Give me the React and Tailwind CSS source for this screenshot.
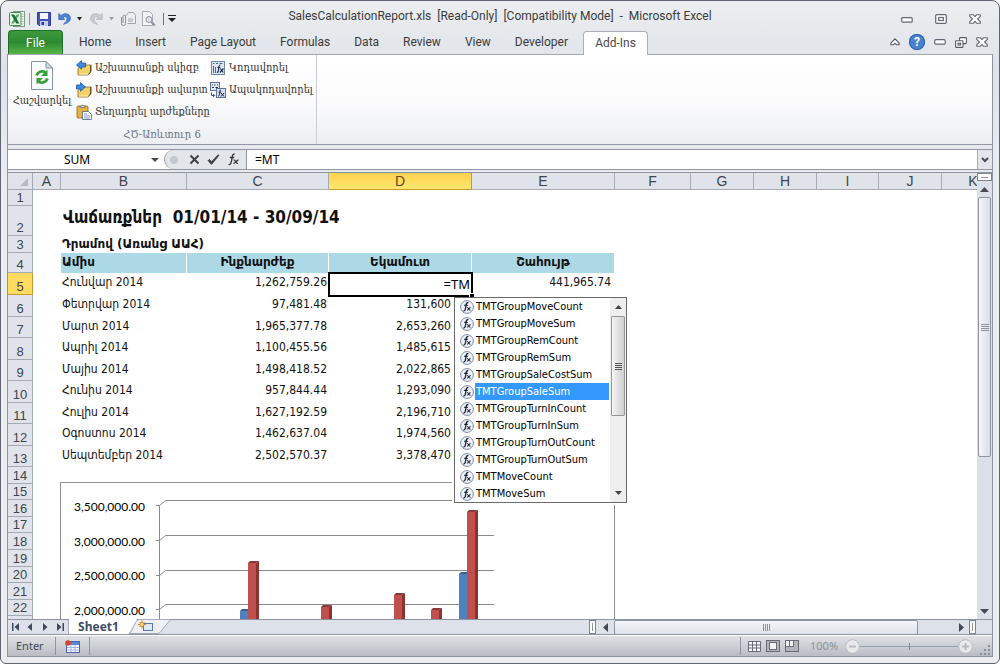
import React from 'react';

const UI = "font-[Roboto,'Open_Sans',sans-serif]";
const HUMANIST = "font-['Noto_Sans','Open_Sans',sans-serif]";
const CELL = "font-['DejaVu_Sans_Condensed','DejaVu_Sans',sans-serif]";
const SERIF = "font-['DejaVu_Serif_Condensed','DejaVu_Serif',serif]";

const tabs = ['Home', 'Insert', 'Page Layout', 'Formulas', 'Data', 'Review', 'View', 'Developer'];

const columns = [
  { id: 'A', width: 'w-[28px]' },
  { id: 'B', width: 'w-[126px]' },
  { id: 'C', width: 'w-[142px]' },
  { id: 'D', width: 'w-[143px]' },
  { id: 'E', width: 'w-[143px]' },
  { id: 'F', width: 'w-[76px]' },
  { id: 'G', width: 'w-[63px]' },
  { id: 'H', width: 'w-[63px]' },
  { id: 'I', width: 'w-[62px]' },
  { id: 'J', width: 'w-[63px]' },
  { id: 'K', width: 'w-[63px]' },
];

const sales = [
  { row: 6, h: 'h-[22px]', month: 'Փետրվար 2014', cost: '97,481.48', income: '131,600' },
  { row: 7, h: 'h-[21px]', month: 'Մարտ 2014', cost: '1,965,377.78', income: '2,653,260' },
  { row: 8, h: 'h-[22px]', month: 'Ապրիլ 2014', cost: '1,100,455.56', income: '1,485,615' },
  { row: 9, h: 'h-[21px]', month: 'Մայիս 2014', cost: '1,498,418.52', income: '2,022,865' },
  { row: 10, h: 'h-[22px]', month: 'Հունիս 2014', cost: '957,844.44', income: '1,293,090' },
  { row: 11, h: 'h-[21px]', month: 'Հուլիս 2014', cost: '1,627,192.59', income: '2,196,710' },
  { row: 12, h: 'h-[22px]', month: 'Օգոստոս 2014', cost: '1,462,637.04', income: '1,974,560' },
  { row: 13, h: 'h-[21px]', month: 'Սեպտեմբեր 2014', cost: '2,502,570.37', income: '3,378,470' },
];

const emptyRows = [
  { row: 14, h: 'h-[17px]' },
  { row: 15, h: 'h-[16px]' },
  { row: 16, h: 'h-[17px]' },
  { row: 17, h: 'h-[16px]' },
  { row: 18, h: 'h-[17px]' },
  { row: 19, h: 'h-[17px]' },
  { row: 20, h: 'h-[16px]' },
  { row: 21, h: 'h-[17px]' },
  { row: 22, h: 'h-[16px]' },
];

const functions = [
  'TMTGroupMoveCount',
  'TMTGroupMoveSum',
  'TMTGroupRemCount',
  'TMTGroupRemSum',
  'TMTGroupSaleCostSum',
  'TMTGroupSaleSum',
  'TMTGroupTurnInCount',
  'TMTGroupTurnInSum',
  'TMTGroupTurnOutCount',
  'TMTGroupTurnOutSum',
  'TMTMoveCount',
  'TMTMoveSum',
];

/* ---------- icons ---------- */

function ExcelIcon() {
  return (
    <svg width="16" height="16" viewBox="0 0 16 16">
      <rect x="4.5" y=".5" width="11" height="15" fill="#fff" stroke="#7f9a83" />
      <path d="M12.500 3h2M12.500 5.500h2M12.500 8h2M12.500 10.500h2M12.500 13h2" stroke="#9db8a1" />
      <rect x=".5" y="1.500" width="11.500" height="13" rx="1" fill="#e9f5e9" stroke="#3f8a4a" />
      <path d="M10.500 3.500H7.700L2 12.500h2.800z" fill="#54b05c" />
      <path d="M2 3.500h3.200l5.300 9H7.300z" fill="#1a7530" />
    </svg>
  );
}

function SaveIcon() {
  return (
    <svg width="14" height="14" viewBox="0 0 14 14">
      <path d="M.5.5h13v13H2L.5 12z" fill="#4a55b8" stroke="#2f3a94" />
      <rect x="3" y="1" width="8" height="6" fill="#f4f6fc" />
      <rect x="3" y="9" width="8" height="5" fill="#c9cff0" />
      <rect x="4.500" y="10" width="2.500" height="3" fill="#2f3a94" />
    </svg>
  );
}

function UndoIcon({ redo }) {
  return (
    <svg width="13" height="13" viewBox="0 0 13 13" className={redo ? '-scale-x-100' : ''}>
      <path
        d="M.8 1.500v6h6L4.800 5.600C6.300 4.200 8.900 4.400 9 6.500c.1 1.800-1 3.600-3.500 5.700 4.500-1 7.200-3.200 6.900-6.400C12.100 1.500 6.300.2 3 3.700z"
        fill={redo ? '#c9ccd2' : '#4a86d8'}
        stroke={redo ? '#aeb2b9' : '#2a5cae'}
        strokeWidth=".7"
      />
    </svg>
  );
}

function Caret({ className = 'fill-[#222]' }) {
  return (
    <svg width="7" height="4" viewBox="0 0 7 4" className={className}>
      <path d="M1 0h5L3.500 3.500z" />
    </svg>
  );
}

function MailIcon() {
  return (
    <svg width="16" height="16" viewBox="0 0 16 16" fill="none" stroke="#a0a4aa">
      <path d="M5.500 5.500l3-4h5l2 3v8h-8" fill="#eceef1" />
      <path d="M8 8h5M8 10h5" />
      <path d="M1.500 6v6.500a2 2 0 0 0 4 0V5a1.300 1.300 0 0 0-2.500 0v7" stroke="#8d9198" />
    </svg>
  );
}

function PreviewIcon() {
  return (
    <svg width="15" height="16" viewBox="0 0 15 16" fill="none" stroke="#a8abb1">
      <path d="M1.500.5h7l3 3v11h-10z" fill="#f3f4f6" />
      <circle cx="8" cy="8.500" r="3" fill="#dfe2e6" stroke="#8f939a" />
      <path d="M10.200 10.800l3.600 3.700" stroke="#8f939a" strokeWidth="2" />
    </svg>
  );
}

function CalcIcon() {
  return (
    <svg width="22" height="29" viewBox="0 0 22 29">
      <path d="M.5.500h14.500l6.500 6.500v21.500H.5z" fill="#fbfcfe" stroke="#8593a8" />
      <path d="M15 .500V7h6.500z" fill="#d4dce8" stroke="#8593a8" />
      <path d="M5.500 14.500a6 6 0 0 1 8.800-3.200M16.500 17.500a6 6 0 0 1-8.800 3.200" fill="none" stroke="#35a138" strokeWidth="2.800" />
      <path d="M16.500 8.500v6.500h-6.500zM5.500 23.500V17h6.500z" fill="#35a138" />
    </svg>
  );
}

function BookArrowIcon({ right }) {
  return (
    <svg width="16" height="16" viewBox="0 0 16 16">
      <path d="M2 8.500L5 5h9.500v7L12 15H2z" fill="#f2d268" stroke="#8a6a1f" strokeWidth=".8" />
      <path d="M12 15l3.500-3.500V4.500L14 5v6.500z" fill="#6b5218" />
      <path d="M3 14h9" stroke="#fff3bd" />
      {right ? (
        <path d="M.5 3h4V.6L9.500 5l-5 4.200V7h-4z" fill="#3f8ae0" stroke="#1f56a8" strokeWidth=".8" />
      ) : (
        <path d="M9.500 3h-4V.6L.5 5l5 4.200V7h4z" fill="#3f8ae0" stroke="#1f56a8" strokeWidth=".8" />
      )}
    </svg>
  );
}

function PasteIcon() {
  return (
    <svg width="16" height="16" viewBox="0 0 16 16">
      <rect x="1" y="2" width="11" height="12" rx="1" fill="#e9b23e" stroke="#8f6415" strokeWidth=".8" />
      <path d="M4 3.500V2h1.200a1.400 1.400 0 0 1 2.600 0H9v1.500z" fill="#d4d8de" stroke="#5d6470" strokeWidth=".7" />
      <path d="M6.500 7.500h6l3 3v5h-9z" fill="#fff" stroke="#4f6284" strokeWidth=".8" />
      <path d="M8 10h3M8 12h6M8 14h6" stroke="#7f98c4" />
    </svg>
  );
}

function EncodeIcon() {
  return (
    <svg width="14" height="14" viewBox="0 0 14 14">
      <rect x=".5" y=".5" width="13" height="13" fill="#dbe5f3" stroke="#6f87ab" />
      <path d="M2 2.500h1.500M5 2.500h2M8.500 2.500h3M2.500 5v7M4.500 6v6" stroke="#4e6487" />
      <path d="M9.300 4c-1.600 0-1.300 2-1.800 5-.2 1.600-.6 2.500-1.600 2.300M6.300 6.500h3" fill="none" stroke="#1e2f4d" strokeWidth="1.200" />
      <path d="M9.300 7.500l3 4M12.500 7.500l-3.500 4" stroke="#1e2f4d" strokeWidth="1.200" />
    </svg>
  );
}

function DecodeIcon() {
  return (
    <svg width="16" height="16" viewBox="0 0 16 16">
      <rect x=".5" y=".5" width="9" height="8" fill="#e3ebf6" stroke="#5d7399" />
      <path d="M2 3h1M4 3h1.500M7 3h1M2 5.500h2M5.500 5.500h2.500" stroke="#1f3050" />
      <path d="M1.500 10.500v3h3M3.200 12l1.500 1.500-1.500 1.500" fill="none" stroke="#2c57a0" />
      <rect x="6.500" y="6.500" width="9" height="9" fill="#d3dff0" stroke="#5d7399" />
      <path d="M11 7.800c-1.500 0-1 2.500-1.600 5-.2 1-.6 1.500-1.300 1.300M8.700 10h2.500M11 11l3 3.500M14 11l-3 3.500" fill="none" stroke="#16233c" />
    </svg>
  );
}

function FxIcon() {
  return (
    <svg width="14" height="14" viewBox="0 0 14 14" className="shrink-0">
      <circle cx="7" cy="7" r="6.400" fill="#edf2fa" stroke="#7d8ba3" />
      <path d="M8.400 2.700C6 2 6.200 5 5.600 7.800c-.4 2.200-.8 3.400-2.200 3.100M4.200 5.300h3.600" fill="none" stroke="#1c2433" strokeWidth="1.300" />
      <path d="M7 7.500c1.600-.4 1.700 3.200 3.500 2.800M10.600 7.500c-1.300 0-2 2.900-3.700 2.800" fill="none" stroke="#1c2433" strokeWidth="1.100" />
    </svg>
  );
}

function MinimizeGlyph() {
  return (
    <svg width="12" height="6" viewBox="0 0 12 6">
      <rect x=".7" y=".7" width="10.500" height="4.500" rx="1" fill="#fff" stroke="#626875" strokeWidth="1.200" />
    </svg>
  );
}

function MaximizeGlyph() {
  return (
    <svg width="12" height="10" viewBox="0 0 12 10">
      <rect x=".7" y=".7" width="10.600" height="8.600" rx="1" fill="#fff" stroke="#626875" strokeWidth="1.200" />
      <rect x="3.700" y="3.500" width="4.600" height="3" fill="#fff" stroke="#626875" strokeWidth="1.200" />
    </svg>
  );
}

function RestoreGlyph() {
  return (
    <svg width="12" height="11" viewBox="0 0 12 11" fill="#fff" stroke="#555b66" strokeWidth="1.100">
      <rect x="4.600" y=".6" width="6.800" height="6" rx=".6" />
      <rect x=".6" y="3.800" width="7.400" height="6.600" rx=".6" />
      <rect x="3" y="6.200" width="2.600" height="1.800" />
    </svg>
  );
}

function CloseGlyph() {
  return (
    <svg width="12" height="10" viewBox="0 0 12 10">
      <path
        d="M.7.7h3.600L6 2.700 7.700.7h3.600v1.600L8.600 5l2.700 2.700v1.600H7.700L6 7.300l-1.700 2H.7V7.700L3.400 5 .7 2.300z"
        fill="#fff"
        stroke="#626875"
        strokeWidth="1.100"
        strokeLinejoin="round"
      />
    </svg>
  );
}

function Arrow({ dir }) {
  const d = {
    up: 'M0 6h9L4.500 1z',
    down: 'M0 1h9L4.500 6z',
    left: 'M6 0v9L1 4.500z',
    right: 'M1 0v9l5-4.500z',
  }[dir];
  const tall = dir === 'left' || dir === 'right';
  return (
    <svg width={tall ? 6 : 9} height={tall ? 9 : 6} className="fill-[#444a54]">
      <path d={d} />
    </svg>
  );
}

function SheetNavIcon({ kind }) {
  const d = {
    first: 'M1 0h1.500v8H1zM8 0v8L3.500 4z',
    prev: 'M6 0v8L1.500 4z',
    next: 'M2 0v8l4.500-4z',
    last: 'M1 0v8l4.500-4zM6.500 0H8v8H6.500z',
  }[kind];
  return (
    <svg width="9" height="8" className="fill-[#3f4a5c]">
      <path d={d} />
    </svg>
  );
}

/* ---------- window chrome ---------- */

function TitleBar() {
  return (
    <div className="relative flex h-[29px] shrink-0 items-center justify-between pl-2 pr-[18px] pt-[6px]">
      <div className="flex items-center">
        <ExcelIcon />
        <span className="ml-1 mr-[7px] h-3 w-px bg-[#8d929b]" />
        <button aria-label="Save"><SaveIcon /></button>
        <button aria-label="Undo" className="ml-[7px]"><UndoIcon /></button>
        <button aria-label="Undo history" className="ml-[5px]"><Caret /></button>
        <button aria-label="Redo" className="ml-[7px]"><UndoIcon redo /></button>
        <button aria-label="Redo history" className="ml-[5px]"><Caret className="fill-[#9a9ea6]" /></button>
        <button aria-label="E-mail" className="ml-[5px]"><MailIcon /></button>
        <button aria-label="Print preview" className="ml-[5px]"><PreviewIcon /></button>
        <span className="ml-[7px] mr-1 h-3 w-px bg-[#6d727b]" />
        <button aria-label="Customize toolbar">
          <svg width="8" height="7" viewBox="0 0 8 7" className="fill-[#222]">
            <path d="M0 0h8v1H0zM0 3h8L4 7z" />
          </svg>
        </button>
      </div>
      <div className={`${UI} pointer-events-none absolute inset-x-0 top-1 text-center text-[12px] leading-[22px] whitespace-pre text-[#3b3b3b]`}>
        {'SalesCalculationReport.xls  [Read-Only]  [Compatibility Mode]  -  Microsoft Excel'}
      </div>
      <div className="flex items-center gap-[22px]">
        <button aria-label="Minimize" className="pt-[3px]"><MinimizeGlyph /></button>
        <button aria-label="Maximize"><MaximizeGlyph /></button>
        <button aria-label="Close"><CloseGlyph /></button>
      </div>
    </div>
  );
}

function TabRow() {
  return (
    <div className={`${UI} flex h-6 shrink-0 items-end pl-[7px] pr-[11px] text-[12px] text-[#3b3b3b]`}>
      <button className="h-6 w-[55px] rounded-t-[4px] border border-b-0 border-[#1f6b28] bg-linear-to-b from-[#3f9a3c] via-[#2c8a33] to-[#58b548] text-white">
        File
      </button>
      <nav className="ml-1 flex h-6 items-center">
        {tabs.map((tab) => (
          <button key={tab} className="h-6 px-3">
            {tab}
          </button>
        ))}
        <button className="z-10 -mb-px ml-[3px] h-6 w-[65px] rounded-t-[4px] border border-b-0 border-[#a9afb8] bg-white text-[#4a4a4a]">
          Add-Ins
        </button>
      </nav>
      <div className="ml-auto flex h-6 items-center gap-[9px]">
        <button aria-label="Collapse ribbon">
          <svg width="10" height="8" viewBox="0 0 10 8" fill="#fff" stroke="#555b66" strokeWidth="1.100">
            <path d="M5 .8L.9 5v1.700h2.600L5 5.200l1.500 1.500h2.600V5z" />
          </svg>
        </button>
        <button aria-label="Help" className="flex size-4 items-center justify-center rounded-full bg-[#4a82d0] text-[12px] leading-4 font-bold text-white ring-1 ring-[#2f62ad] ring-inset">
          ?
        </button>
        <button aria-label="Minimize workbook"><MinimizeGlyph /></button>
        <button aria-label="Restore workbook"><RestoreGlyph /></button>
        <button aria-label="Close workbook"><CloseGlyph /></button>
      </div>
    </div>
  );
}

function RibbonButton({ icon, label }) {
  return (
    <button className="flex h-[22px] items-center gap-[3px] whitespace-nowrap">
      <span className="flex w-4 justify-center">{icon}</span>
      {label}
    </button>
  );
}

function Ribbon() {
  return (
    <div className="flex h-[91px] shrink-0 border-y border-t-[#a3a9b3] border-b-[#9299a5] bg-linear-to-b from-white via-[#fcfcfd] to-[#eceef1]">
      <div className={`${SERIF} flex w-[309px] flex-col border-r border-[#c9cdd3] text-[11px] text-[#333]`}>
        <div className="flex pl-1 pt-[2px]">
          <button className="flex w-[60px] flex-col items-center gap-[3px] pt-1 whitespace-nowrap">
            <CalcIcon />
            Հաշվարկել
          </button>
          <div className="ml-1 flex w-[134px] flex-col items-start">
            <RibbonButton icon={<BookArrowIcon />} label="Աշխատանքի սկիզբ" />
            <RibbonButton icon={<BookArrowIcon right />} label="Աշխատանքի ավարտ" />
            <RibbonButton icon={<PasteIcon />} label="Տեղադրել արժեքները" />
          </div>
          <div className="flex flex-col items-start">
            <RibbonButton icon={<EncodeIcon />} label="Կոդավորել" />
            <RibbonButton icon={<DecodeIcon />} label="Ապակոդավորել" />
          </div>
        </div>
        <div className="mt-auto pb-px text-center text-[#6b7280]">ՀԾ-Առևտուր 6</div>
      </div>
    </div>
  );
}

function FormulaBar() {
  return (
    <div className="mt-1 flex h-[21px] shrink-0 border-y border-[#8f96a1] bg-white">
      <input
        aria-label="Name box"
        defaultValue="SUM"
        className={`${HUMANIST} w-[138px] bg-white text-center text-[12px] text-black outline-none`}
      />
      <button aria-label="Names" className="flex w-[18px] items-center justify-center">
        <svg width="8" height="4" className="fill-[#444a54]"><path d="M0 0h8L4 4z" /></svg>
      </button>
      <div className="flex w-[83px] items-center gap-[7px] rounded-l-full border-x border-[#8f96a1] bg-[#e2e5ea] pl-[5px]">
        <span className="size-2 rounded-full bg-[#c3c7ce]" />
        <button aria-label="Cancel" className="ml-1">
          <svg width="11" height="11" viewBox="0 0 11 11" stroke="#3d424b" strokeWidth="2">
            <path d="M1.500 1.500l8 8M9.500 1.500l-8 8" />
          </svg>
        </button>
        <button aria-label="Enter">
          <svg width="13" height="11" viewBox="0 0 13 11" fill="#3d424b">
            <path d="M.5 6.500l2-1.500 2 2.200L11 .5l1.500.800L5 10.500H4z" />
          </svg>
        </button>
        <button aria-label="Insert function">
          <svg width="13" height="13" viewBox="0 0 13 13" fill="none" stroke="#333841" strokeWidth="1.300">
            <path d="M7.800 1.200C5 .6 5.300 4 4.600 7.500 4 10.800 3.300 12 1.500 11.600M2.800 4.500h4.400M6.500 6.800c2-.4 2.200 4 4.500 3.600M11.500 6.800c-1.800 0-3 3.700-5 3.600" />
          </svg>
        </button>
      </div>
      <input
        aria-label="Formula"
        defaultValue="=MT"
        className={`${HUMANIST} min-w-0 flex-1 bg-white pl-2 text-[12px] text-black outline-none`}
      />
      <button aria-label="Expand formula bar" className="flex w-[15px] items-center justify-center border-l border-[#a9afb8] bg-[#e2e5ea]">
        <svg width="8" height="6" viewBox="0 0 8 6" fill="none" stroke="#444a54" strokeWidth="2">
          <path d="M1 1l3 3 3-3" />
        </svg>
      </button>
    </div>
  );
}

/* ---------- sheet ---------- */

function RowHeader({ n, active }) {
  return (
    <th
      className={`border-r border-b p-0 align-bottom text-[13px] leading-[15px] font-normal ${
        active ? 'border-[#c99a2e] bg-[#ffdb62] text-[#444]' : 'border-[#a5abb5] bg-[#e0e4ea] text-[#3f444d]'
      }`}
    >
      {n}
    </th>
  );
}

function FunctionList() {
  return (
    <div className="absolute top-[24px] left-[125px] z-30 flex h-[206px] w-[173px] border border-[#6a6a6a] bg-white shadow-[-2px_2px_0_white]">
      <ul className={`${CELL} min-w-0 flex-1 text-left text-[11px] text-black`}>
        {functions.map((name) => (
          <li key={name} className="flex h-[17px] items-center pr-px pl-[5px]">
            <FxIcon />
            <button
              className={`ml-px h-[17px] flex-1 pl-px text-left leading-[17px] whitespace-nowrap ${
                name === 'TMTGroupSaleSum' ? 'bg-[#3399ff] text-white' : ''
              }`}
            >
              {name}
            </button>
          </li>
        ))}
      </ul>
      <div className="flex w-4 flex-col items-center bg-[#efefef]">
        <button aria-label="Scroll up" className="flex h-[18px] items-center">
          <svg width="7" height="4" className="fill-[#444]"><path d="M0 4h7L3.500 0z" /></svg>
        </button>
        <div className="flex h-[100px] w-[14px] flex-col items-center justify-center gap-px rounded-[1px] border border-[#979797] bg-linear-to-r from-[#f5f5f5] to-[#cfcfd2]">
          <span className="h-px w-[7px] bg-[#555]" />
          <span className="h-px w-[7px] bg-[#555]" />
          <span className="h-px w-[7px] bg-[#555]" />
          <span className="h-px w-[7px] bg-[#555]" />
        </div>
        <button aria-label="Scroll down" className="mt-auto flex h-[18px] items-center">
          <svg width="7" height="4" className="fill-[#444]"><path d="M0 0h7L3.500 4z" /></svg>
        </button>
      </div>
    </div>
  );
}

function Bar({ x, y, side, front, top }) {
  return (
    <g>
      <path d={`M${x} ${y + 2}h8V150h-8z`} fill={front} />
      <path d={`M${x} ${y + 2}l2-2h9l-3 2z`} fill={top} />
      <path d={`M${x + 8} ${y + 2}l3-2V150h-3z`} fill={side} />
    </g>
  );
}

function SalesChart() {
  const red = { front: '#c0504d', top: '#8c3836', side: '#8c3330' };
  const blue = { front: '#4f81bd', top: '#3a6090', side: '#385d8a' };
  return (
    <svg
      width="556"
      height="150"
      viewBox="0 0 556 150"
      className="absolute top-[309px] left-[52px] z-10 bg-white font-['Lato','Carlito',sans-serif] text-[12px]"
    >
      <path d="M.5 150V.500h554V150" fill="none" stroke="#8f8f8f" />
      <g fill="#000" textAnchor="end">
        <text x="85" y="29">3,500,000.00</text>
        <text x="85" y="64">3,000,000.00</text>
        <text x="85" y="98">2,500,000.00</text>
        <text x="85" y="133">2,000,000.00</text>
      </g>
      <g fill="none" stroke="#8a8a8a">
        <path d="M99.500 23V150" />
        <path d="M96 23.500h3.500l6-5H434" />
        <path d="M96 58.500h3.500l6-5H434" />
        <path d="M96 93.500h3.500l6-5H434" />
        <path d="M96 127.500h3.500l6-5H434" />
      </g>
      <Bar x={180} y={127} {...blue} />
      <Bar x={188} y={79} {...red} />
      <Bar x={261} y={123} {...red} />
      <Bar x={334} y={111} {...red} />
      <Bar x={371} y={126} {...red} />
      <Bar x={399} y={90} {...blue} />
      <Bar x={407} y={28} {...red} />
    </svg>
  );
}

function Sheet() {
  const head = "border-r border-white bg-[#add8e6] p-0 align-top font-['DejaVu_Sans',sans-serif] font-bold";
  return (
    <div className="relative min-w-0 flex-1 overflow-hidden bg-white">
      <table className={`${CELL} w-[997px] table-fixed border-separate border-spacing-0 text-[12px] leading-[18px] text-[#111]`}>
        <thead className="font-['Liberation_Sans',Arial,sans-serif]">
          <tr className="h-[17px]">
            <th className="w-[25px] border-r border-b border-[#a5abb5] bg-[#e0e4ea] p-0 leading-4">
              <svg width="8" height="8" className="mt-[2px] mr-1 ml-auto fill-[#b4b9c2]"><path d="M8 0v8H0z" /></svg>
            </th>
            {columns.map((col) => (
              <th
                key={col.id}
                className={`${col.width} border-r border-b p-0 text-[14px] leading-4 font-normal ${
                  col.id === 'D'
                    ? 'border-[#c99a2e] bg-linear-to-b from-[#ffd24f] to-[#ffe66e] text-[#5a4a20]'
                    : 'border-[#a5abb5] bg-[#e0e4ea] text-[#3f444d]'
                }`}
              >
                {col.id}
              </th>
            ))}
          </tr>
        </thead>
        <tbody className="[&_th:first-child]:font-['Liberation_Sans',Arial,sans-serif]">
          <tr className="h-4">
            <RowHeader n={1} />
          </tr>
          <tr className="h-[30px]">
            <RowHeader n={2} />
            <td />
            <td colSpan={3} className="p-0 pl-[2px] align-top text-[17px] leading-[22px] font-bold whitespace-pre">
              {'Վաճառքներ  01/01/14 - 30/09/14'}
            </td>
          </tr>
          <tr className="h-[17px]">
            <RowHeader n={3} />
            <td />
            <td colSpan={3} className="p-0 pl-px align-top font-['DejaVu_Sans',sans-serif] leading-4 font-bold whitespace-nowrap">
              Դրամով (Առանց ԱԱՀ)
            </td>
          </tr>
          <tr className="h-5">
            <RowHeader n={4} />
            <td />
            <th className={`${head} pl-px text-left`}>Ամիս</th>
            <th className={head}>Ինքնարժեք</th>
            <th className={head}>Եկամուտ</th>
            <th className={head}>Շահույթ</th>
          </tr>
          <tr className="h-[22px]">
            <RowHeader n={5} active />
            <td />
            <td className="p-0 pl-px align-top whitespace-nowrap">Հունվար 2014</td>
            <td className="p-0 pr-[2px] text-right align-top">1,262,759.26</td>
            <td className="relative z-20 p-0">
              <div className="absolute -inset-x-px -top-px h-[25px] border-2 border-black bg-white">
                <input
                  aria-label="D5"
                  defaultValue="=TM"
                  className={`${HUMANIST} block h-5 w-full pr-px text-right text-[13px] text-black outline-none`}
                />
                <span className="absolute -right-[3px] -bottom-[3px] size-[5px] border-t border-l border-white bg-black" />
              </div>
              <FunctionList />
            </td>
            <td className="p-0 pr-1 text-right align-top">441,965.74</td>
          </tr>
          {sales.map((s) => (
            <tr key={s.row} className={s.h}>
              <RowHeader n={s.row} />
              <td />
              <td className="p-0 pl-px align-top whitespace-nowrap">{s.month}</td>
              <td className="p-0 pr-[2px] text-right align-top">{s.cost}</td>
              <td className="p-0 pr-[21px] text-right align-top">{s.income}</td>
            </tr>
          ))}
          {emptyRows.map((r) => (
            <tr key={r.row} className={r.h}>
              <RowHeader n={r.row} />
            </tr>
          ))}
          <tr className="h-[17px]">
            <RowHeader />
          </tr>
        </tbody>
      </table>
      <SalesChart />
    </div>
  );
}

function VerticalScrollbar() {
  return (
    <div className="flex w-[15px] shrink-0 flex-col items-center bg-[#dce0e8]">
      <span className="flex h-2 w-[15px] shrink-0 items-center justify-center border border-[#7d8490] bg-white">
        <span className="h-px w-[7px] bg-[#8d929b]" />
      </span>
      <button aria-label="Scroll up" className="flex h-4 items-center"><Arrow dir="up" /></button>
      <div className="flex h-[260px] w-[13px] flex-col items-center justify-center gap-px rounded-[2px] border border-[#8e95a1] bg-linear-to-r from-[#f4f6f9] to-[#d9dde5]">
        <span className="h-px w-2 bg-[#8d929b]" />
        <span className="h-px w-2 bg-[#8d929b]" />
        <span className="h-px w-2 bg-[#8d929b]" />
        <span className="h-px w-2 bg-[#8d929b]" />
      </div>
      <button aria-label="Scroll down" className="mt-auto flex h-4 items-center"><Arrow dir="down" /></button>
    </div>
  );
}

function Splitter() {
  return (
    <span className="flex h-[14px] w-[7px] items-center justify-center border border-[#7d8490] bg-white">
      <span className="h-2 w-px bg-[#8d929b]" />
    </span>
  );
}

function SheetTabs() {
  return (
    <div className="flex h-4 shrink-0 items-stretch border-y border-[#8e95a1] bg-[#dde1e9]">
      <div className="flex w-[61px] items-center justify-between border-r border-[#a5abb5] px-[3px]">
        {['first', 'prev', 'next', 'last'].map((kind) => (
          <button key={kind} aria-label={`${kind} sheet`}><SheetNavIcon kind={kind} /></button>
        ))}
      </div>
      <button className="-mt-px w-[59px] bg-white font-['Noto_Sans',sans-serif] text-[12px] leading-4 font-bold text-[#3f4d63]">
        Sheet1
      </button>
      <button aria-label="Insert worksheet" className="-my-px">
        <svg width="44" height="16" viewBox="0 0 44 16">
          <path d="M0 0h9L0 15z" fill="#fff" />
          <path d="M1 14.500C5 13 6 2 11 .5h31.500L32 13.500Q31 14.500 29 14.500z" fill="#eef0f4" stroke="#a5abb5" />
          <rect x="15.500" y="4.500" width="9" height="7" fill="#dfe8f8" stroke="#5b76ab" />
          <circle cx="14" cy="5.500" r="2" fill="#ffe08a" stroke="#d08a1f" />
          <path d="M14 1.500v2M14 7.500v2M10 5.500h2M16 5.500h2M11.500 3l1 1M16.500 3l-1 1M11.500 8l1-1" stroke="#d08a1f" />
        </svg>
      </button>
      <div className="ml-auto flex w-[403px] items-center">
        <Splitter />
        <button aria-label="Scroll left" className="ml-[6px]"><Arrow dir="left" /></button>
        <div className="ml-[6px] flex h-[15px] w-[304px] items-center justify-center gap-px rounded-[2px] border border-[#8e95a1] bg-linear-to-b from-[#f4f6f9] to-[#dde1e9]">
          <span className="h-[7px] w-px bg-[#8d929b]" />
          <span className="h-[7px] w-px bg-[#8d929b]" />
          <span className="h-[7px] w-px bg-[#8d929b]" />
          <span className="h-[7px] w-px bg-[#8d929b]" />
        </div>
        <button aria-label="Scroll right" className="ml-auto mr-[5px]"><Arrow dir="right" /></button>
        <Splitter />
        <span className="w-4" />
      </div>
    </div>
  );
}

function ZoomButton({ label, d }) {
  return (
    <button aria-label={label}>
      <svg width="15" height="15" viewBox="0 0 15 15" fill="#e8eaec" stroke="#b9bcc1">
        <circle cx="7.500" cy="7.500" r="6.800" />
        <path d={d} strokeWidth="2" />
      </svg>
    </button>
  );
}

function StatusBar() {
  return (
    <div className={`${HUMANIST} flex h-[22px] shrink-0 items-center border-y border-t-white border-b-[#8e95a1] bg-linear-to-b from-[#dfe1e5] to-[#b9bdc3] text-[11px] text-[#444a54]`}>
      <span className="w-[47px] pl-2">Enter</span>
      <span className="h-[18px] w-px bg-[#8e95a1]" />
      <button aria-label="Record macro" className="flex w-[33px] justify-center">
        <svg width="15" height="13" viewBox="0 0 15 13">
          <rect x="1.500" y="1.500" width="13" height="11" fill="#fff" stroke="#4a66a8" />
          <rect x="2" y="2" width="12" height="3" fill="#5f87d8" />
          <path d="M2 7.500h12M2 10h12M6 5v7M10 5v7" stroke="#9db4e2" />
          <circle cx="3" cy="3" r="2.800" fill="#d8452a" />
        </svg>
      </button>
      <span className="h-[18px] w-px bg-[#8e95a1]" />
      <span className="ml-auto h-[18px] w-px bg-[#8e95a1]" />
      <div className="ml-[7px] flex items-center gap-[5px]">
        <button aria-label="Normal view">
          <svg width="13" height="11" viewBox="0 0 13 11" fill="#f5f6f7" stroke="#666b74">
            <path d="M.5.500h12v10H.5zM.5 4h12M.5 7h12M4.500.500v10M8.500.500v10" />
          </svg>
        </button>
        <button aria-label="Page layout view">
          <svg width="14" height="12" viewBox="0 0 14 12" fill="#b2b6bc" stroke="#666b74">
            <rect x=".5" y=".5" width="13" height="11" />
            <rect x="3.500" y="2.500" width="7" height="7" fill="#f1f2f4" />
          </svg>
        </button>
        <button aria-label="Page break preview">
          <svg width="14" height="12" viewBox="0 0 14 12" fill="#b2b6bc" stroke="#666b74">
            <rect x=".5" y=".5" width="13" height="11" />
            <path d="M.5.500h8v6h-8zM4.500.500v6" fill="#f1f2f4" />
          </svg>
        </button>
      </div>
      <span className="ml-[11px] w-[35px] text-[#8d9198]">100%</span>
      <ZoomButton label="Zoom out" d="M4 7.500h7" />
      <input
        type="range"
        aria-label="Zoom"
        className="h-px w-[98px] appearance-none bg-[#8fa0b3] [&::-webkit-slider-thumb]:h-[7px] [&::-webkit-slider-thumb]:w-px [&::-webkit-slider-thumb]:appearance-none [&::-webkit-slider-thumb]:bg-[#7d8b9c]"
      />
      <ZoomButton label="Zoom in" d="M4 7.500h7M7.500 4v7" />
      <svg width="11" height="11" className="mt-auto ml-[7px] mr-px fill-[#8490a0]">
        <path d="M8 0h2v2H8zM8 4h2v2H8zM4 4h2v2H4zM8 8h2v2H8zM4 8h2v2H4zM0 8h2v2H0z" />
      </svg>
    </div>
  );
}

export default function App() {
  return (
    <div className="flex h-screen flex-col overflow-hidden rounded-t-lg rounded-b-md border border-[#5f6672] bg-linear-to-b from-[#eceef1] via-[#dfe3e7] via-10% to-[#eceef2] to-30%">
      <TitleBar />
      <TabRow />
      <div className="mx-[6px] mb-[6px] flex min-h-0 flex-1 flex-col border-x border-[#8e95a1] bg-[#e6e9ee]">
        <Ribbon />
        <FormulaBar />
        <div className="mt-[2px] flex min-h-0 flex-1 border-t border-[#8f96a1]">
          <Sheet />
          <VerticalScrollbar />
        </div>
        <SheetTabs />
        <StatusBar />
      </div>
    </div>
  );
}
